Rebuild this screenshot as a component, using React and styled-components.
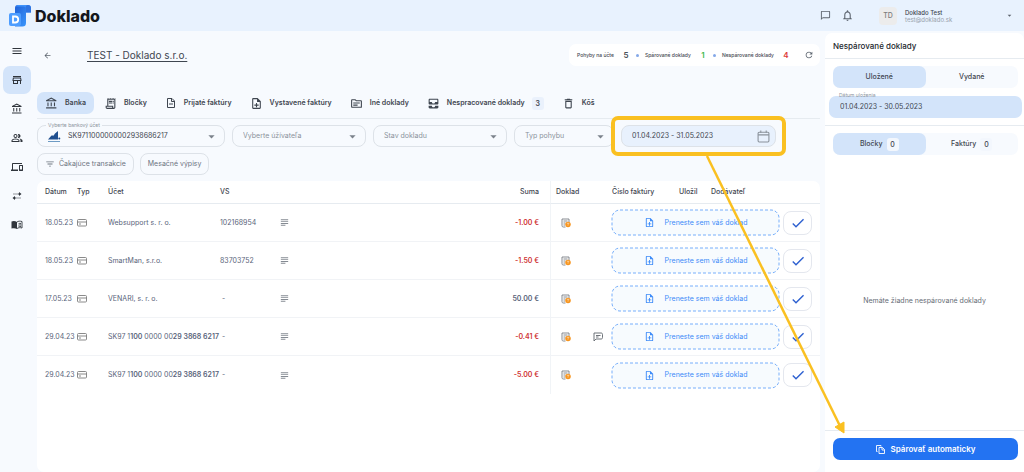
import React, { useState } from "react";
import styled, { createGlobalStyle, css } from "styled-components";
import {
  MdMenu,
  MdOutlineStore,
  MdOutlineAccountBalance,
  MdOutlinePeopleAlt,
  MdOutlineDevices,
  MdArrowBack,
  MdOutlineReceiptLong,
  MdOutlineNoteAdd,
  MdOutlineTopic,
  MdAllInbox,
  MdDeleteOutline,
  MdRefresh,
  MdChatBubbleOutline,
  MdOutlineNotifications,
  MdArrowDropDown,
  MdFilterList,
  MdSubject,
  MdCheck,
} from "react-icons/md";

const color = {
  page: "#f7fafe",
  header: "#e8f2fe",
  active: "#d3e4fa",
  line: "#e6ebf0",
  border: "#dde2e8",
  text: "#3f4650",
  muted: "#8a929c",
  slate: "#59647a",
  blue: "#3d8bf8",
  yellow: "#fac021",
  red: "#cf3434",
};

const GlobalStyle = createGlobalStyle`
  * { box-sizing: border-box; }
  body {
    margin: 0;
    background: ${color.page};
    color: ${color.text};
    font-family: Inter, "Liberation Sans", sans-serif;
    font-size: 7px;
    line-height: 10px;
  }
  button, input, select { font: inherit; color: inherit; margin: 0; padding: 0; border: 0; background: none; }
  button { cursor: pointer; }
  svg { display: block; flex: none; }
`;

const Page = styled.div`
  min-height: 100vh;
  display: flex;
  flex-direction: column;
`;

const Header = styled.header`
  height: 31px;
  padding: 0 10px 0 9px;
  display: flex;
  align-items: center;
  background: ${color.header};
`;

const Brand = styled.a`
  display: flex;
  align-items: center;
  gap: 4px;
  margin-right: auto;
  color: #14171c;
  font-size: 16px;
  line-height: 20px;
  font-weight: 800;
  text-decoration: none;
`;

const IconButton = styled.button`
  display: flex;
  align-items: center;
  justify-content: center;
  color: #5c646e;
`;

const RefreshButton = styled(IconButton)`
  margin-left: 14px;
`;

const HeaderIcons = styled.div`
  display: flex;
  gap: 10px;
  margin-right: 25px;
`;

const Avatar = styled.div`
  width: 18px;
  height: 18px;
  border-radius: 4px;
  background: #ececec;
  color: #7c7c7c;
  font-weight: 500;
  display: flex;
  align-items: center;
  justify-content: center;
`;

const User = styled.div`
  width: 100px;
  margin-left: 8px;
  font-size: 6px;
  line-height: 7px;
  font-weight: 500;
`;

const UserMail = styled.div`
  color: #98a1ac;
  font-weight: 400;
`;

const Body = styled.div`
  flex: 1;
  display: grid;
  grid-template-columns: 37px minmax(0, 1fr) 199px;
`;

const Sidebar = styled.nav`
  padding: 6px 3px;
  display: flex;
  flex-direction: column;
  gap: 1px;
`;

const SideLink = styled.a`
  height: 28px;
  width: 28px;
  border-radius: 7px;
  display: flex;
  align-items: center;
  justify-content: center;
  color: #30353c;
  background: ${(p) => (p.$active ? color.active : "transparent")};
`;

const Main = styled.main`
  display: flex;
  flex-direction: column;
  padding-right: 5px;
`;

const TitleRow = styled.div`
  display: flex;
  align-items: center;
  height: 22px;
  margin-top: 13px;
  padding-left: 6px;
`;

const Title = styled.h1`
  margin: 0 auto 0 35px;
  font-size: 10px;
  line-height: 14px;
  font-weight: 400;
  text-decoration: underline;
  text-underline-offset: 2px;
`;

const Stats = styled.div`
  display: flex;
  align-items: center;
  height: 22px;
  padding: 0 6px 0 8px;
  border-radius: 7px;
  background: #fff;
  font-size: 5px;
  font-weight: 500;
`;

const StatValue = styled.b`
  width: 8px;
  margin-left: 8px;
  text-align: center;
  font-size: 8px;
  font-weight: 600;
  color: ${(p) => p.$tone || "#4b5158"};
`;

const Dot = styled.i`
  width: 3px;
  height: 3px;
  margin: 0 6px;
  border-radius: 50%;
  background: #84a8e8;
`;

const Tabs = styled.div`
  display: flex;
  gap: 2px;
  height: 39px;
  align-items: flex-end;
  margin-top: 14px;
  padding-bottom: 4px;
  border-bottom: 1px solid ${color.line};
`;

const Tab = styled.button`
  height: 22px;
  padding: 0 8px;
  display: flex;
  align-items: center;
  gap: 7px;
  border-radius: 7px;
  font-weight: 600;
  white-space: nowrap;
  background: ${(p) => (p.$active ? color.active : "transparent")};
`;

const Count = styled.span`
  min-width: 12px;
  height: 13px;
  line-height: 13px;
  border-radius: 3px;
  text-align: center;
  background: ${(p) => (p.$light ? "#f3f7fd" : "#eaf1fc")};
`;

const Filters = styled.div`
  display: flex;
  gap: 7px;
  margin-top: 6px;
`;

const Field = styled.div`
  position: relative;
  flex: 0 1 ${(p) => p.$basis}px;
  min-width: 0;
  height: 22px;
  display: flex;
  align-items: center;
  padding: 0 5px 0 10px;
  border: 1px solid ${color.border};
  border-radius: 8px;
  color: ${(p) => (p.$filled ? color.text : color.muted)};
  background: ${(p) => (p.$tint ? "#e8f1fd" : "transparent")};

  select, input { flex: 1; min-width: 0; width: 100%; appearance: none; outline: none; }
  select + svg { color: #7b828b; }
`;

const AccountMark = styled.span`
  margin-right: 7px;
`;

const FloatLabel = styled.label`
  position: absolute;
  top: -5px;
  left: 8px;
  padding: 0 2px;
  font-size: 5px;
  line-height: 8px;
  color: ${color.muted};
  background: ${(p) => (p.$plain ? "transparent" : color.page)};
`;

const Highlight = styled.div`
  position: absolute;
  inset: -10px -11px;
  border: 4px solid ${color.yellow};
  border-radius: 7px;
  pointer-events: none;
  z-index: 2;
`;

const Arrow = styled.svg`
  position: absolute;
  top: 29px;
  left: 79px;
  z-index: 3;
  pointer-events: none;
`;

const Chips = styled.div`
  display: flex;
  gap: 6px;
  margin: 6px 0;
`;

const Chip = styled.button`
  height: 22px;
  padding: 0 7px;
  display: flex;
  align-items: center;
  gap: 4px;
  border: 1px solid ${color.border};
  border-radius: 8px;
  color: #6c747e;
`;

const Card = styled.section`
  flex: 1;
  border-radius: 7px;
  background: #fff;
`;

const Table = styled.table`
  width: 100%;
  table-layout: fixed;
  border-collapse: separate;
  border-spacing: 0;
`;

const Col = styled.col`
  width: ${(p) => (p.$width ? `${p.$width}px` : "auto")};
`;

const Head = styled.th`
  height: 23px;
  padding: 0 ${(p) => (p.$end ? 11 : 0)}px 0 ${(p) => p.$pad || 0}px;
  border-bottom: 1px solid ${color.line};
  border-right: ${(p) => (p.$end ? "1px solid #f1f4f7" : "0")};
  text-align: ${(p) => (p.$end ? "right" : "left")};
  font-weight: 500;
  white-space: nowrap;
`;

const Cell = styled.td`
  height: 38px;
  padding: 0 ${(p) => (p.$end ? 11 : 0)}px 0 ${(p) => p.$pad || 0}px;
  border-bottom: 1px solid #f1f3f6;
  border-right: ${(p) => (p.$end ? "1px solid #f1f4f7" : "0")};
  text-align: ${(p) => (p.$end ? "right" : "left")};
  color: ${(p) => (p.$negative ? color.red : color.slate)};
  font-weight: ${(p) => (p.$end ? 600 : 400)};
  white-space: nowrap;
  tr:last-child > & { border-bottom: 0; }
  b { font-weight: 600; }
`;

const Actions = styled.div`
  display: flex;
  align-items: center;
  gap: 4px;
  padding-right: 8px;
`;

const DropZone = styled.button`
  position: relative;
  flex: 1;
  height: 25px;
  display: flex;
  align-items: center;
  justify-content: center;
  gap: 10px;
  border-radius: 8px;
  background: #f7fbfe;
  color: ${color.blue};
`;

const Dashes = styled.svg`
  position: absolute;
  inset: 0;
  width: 100%;
  height: 100%;
  overflow: visible;
`;

const CheckButton = styled.button`
  width: 29px;
  height: 24px;
  display: flex;
  align-items: center;
  justify-content: center;
  border: 1px solid #e4e7ee;
  border-radius: 8px;
  color: #2c5fd0;
`;

const Aside = styled.aside`
  display: flex;
  flex-direction: column;
  margin-top: 2px;
  background: #fff;
  border-radius: 7px 7px 0 0;
`;

const AsideTitle = styled.h2`
  margin: 0;
  padding: 0 8px;
  height: 26px;
  font-size: 8px;
  line-height: 27px;
  font-weight: 500;
  color: #23272d;
  border-bottom: 1px solid ${color.line};
`;

const Segment = styled.div`
  display: grid;
  grid-template-columns: 1fr 1fr;
  margin: ${(p) => p.$top}px 6px 0 8px;
  border-radius: 7px;
  background: #f7fafe;
`;

const SegmentButton = styled.button`
  height: 22px;
  display: flex;
  align-items: center;
  justify-content: center;
  gap: 4px;
  border-radius: 7px;
  font-weight: 500;
  ${(p) => p.$active && css`background: ${color.active};`}
`;

const AsideDate = styled.div`
  position: relative;
  margin: 8px 2px 0 4px;
  height: 22px;
  display: flex;
  padding: 0 11px;
  border-radius: 7px;
  background: ${color.active};
  input { width: 100%; outline: none; }
`;

const Rule = styled.hr`
  width: 100%;
  margin: 7px 0 0;
  border: 0;
  border-top: 1px solid ${color.line};
`;

const Empty = styled.p`
  flex: 1;
  margin: 0;
  padding-top: 17px;
  display: flex;
  align-items: center;
  justify-content: center;
  color: #666d76;
`;

const AsideFooter = styled.div`
  padding: 7px 6px 12px 8px;
  border-top: 1px solid ${color.line};
`;

const Primary = styled.button`
  width: 100%;
  height: 22px;
  display: flex;
  align-items: center;
  justify-content: center;
  gap: 6px;
  border-radius: 7px;
  background: #2373f2;
  color: #fff;
  font-size: 8px;
  font-weight: 600;
`;

const Logo = () => (
  <svg width="22" height="22" viewBox="0 0 22 22" aria-hidden="true">
    <defs>
      <linearGradient id="roll" x1="0" y1="0" x2="1" y2="1">
        <stop offset="0" stopColor="#1f5fd6" />
        <stop offset="1" stopColor="#3c9bff" />
      </linearGradient>
    </defs>
    <path d="M9 0h10l-2 3v15a3.500 3.500 0 0 1-3.500 3.500H6V3c0-2 1-3 3-3z" fill="url(#roll)" />
    <path d="M8.500 0h10.500c2 0 3 1.200 3 3v4.500h-5.500V3c0-1-1-1.500-2-1.500H7z" fill="#3f93fb" />
    <path d="M16.500 7.500V3c0-1.800 1-3 2.500-3S22 1.200 22 3v4.500z" fill="#2f74e0" />
    <rect x="0" y="8" width="12" height="13" rx="2" fill="#4d9dff" />
    <path d="M4 11.500h2.200a3 3 0 0 1 0 6H4z" fill="none" stroke="#fff" strokeWidth="1.800" />
  </svg>
);

const BankLogo = () => (
  <svg width="13" height="13" viewBox="0 0 13 13" aria-hidden="true">
    <path d="M0 9.500L3.500 5.500h2L3.500 9.500zM3 9.500L7 3.500l3-2.500v8.500z" fill="#1f4f8f" />
    <circle cx="11.300" cy="8.500" r="1" fill="#1f4f8f" />
    <path d="M0 11.500h12" stroke="#6d9bc4" />
  </svg>
);

const SwapIcon = () => (
  <svg width="10" height="10" viewBox="0 0 10 10" fill="currentColor" aria-hidden="true">
    <path d="M1.500 2.500h1v1h-1zM3.500 2.500h1v1h-1zM5.500 2.500H7V1l2.500 2L7 5V3.500H5.500zM7.500 6.500h1v1h-1zM5.500 6.500h1v1h-1zM4.500 6.500H3V5L.500 7 3 9V7.500h1.500z" />
  </svg>
);

const BookIcon = () => (
  <svg width="12" height="12" viewBox="0 0 24 24" fill="none" stroke="currentColor" strokeWidth="1.800" aria-hidden="true">
    <path d="M1 5c4-2 8-1 11 1v14c-3-2-7-2-11-1z" fill="currentColor" stroke="none" />
    <path d="M12 6c3-2 6-2 10-1v13c-4-1-7-1-10 1M15 9.500c2-1 3-1 5-.500M15 12.500c2-1 3-1 5-.500M15 15.500c2-1 3-1 5-.500" />
  </svg>
);

const FileMinus = () => (
  <svg width="12" height="12" viewBox="0 0 24 24" fill="none" stroke="currentColor" strokeWidth="2" aria-hidden="true">
    <path d="M14 3H5v18h14V8zM13 3v6h6M8 14h8" />
  </svg>
);

const CardIcon = () => (
  <svg width="10" height="8" viewBox="0 0 20 16" fill="none" stroke="#7d7d7d" strokeWidth="1.800" aria-hidden="true">
    <rect x="1" y="1" width="18" height="13" rx="2" />
    <path d="M1 6h18M4 10h4" />
  </svg>
);

const DocIcon = () => (
  <svg width="10" height="10" viewBox="0 0 20 20" fill="none" stroke="#6a6f76" strokeWidth="1.600" aria-hidden="true">
    <path d="M9 18H5c-2 0-3-1-3-3V2h14v7M5 6h8M5 10h4M5 14h3" />
    <circle cx="14" cy="13" r="5.500" fill="#f7941d" stroke="none" />
    <path d="M12.500 11.500c0-2 3-2 3 0 0 1-1.500 1-1.500 2M14 15v1" stroke="#fff" strokeWidth="1.200" />
  </svg>
);

const MessageIcon = () => (
  <svg width="10" height="10" viewBox="0 0 20 20" fill="none" stroke="#5f646b" strokeWidth="1.800" aria-hidden="true">
    <path d="M2 18V2h14c2 0 3 1 3 3v6c0 2-1 3-3 3H6zM6 7h9M6 10h5" />
  </svg>
);

const CalendarIcon = () => (
  <svg width="13" height="13" viewBox="0 0 24 24" fill="none" stroke="#8a929b" strokeWidth="2" aria-hidden="true">
    <rect x="2" y="4" width="20" height="18" rx="2" />
    <path d="M2 9h20M7 1v4M17 1v4" />
  </svg>
);

const CopyIcon = () => (
  <svg width="9" height="9" viewBox="0 0 18 18" fill="none" stroke="#fff" strokeWidth="1.800" aria-hidden="true">
    <path d="M6 5h7l4 4v8H6zM12 5v5h5M3 13H1V1h9v2" />
  </svg>
);

const sideItems = [
  ["Menu", MdMenu],
  ["Firma", MdOutlineStore],
  ["Banka", MdOutlineAccountBalance],
  ["Ľudia", MdOutlinePeopleAlt],
  ["Zariadenia", MdOutlineDevices],
  ["Prevody", SwapIcon],
  ["Účtovníctvo", BookIcon],
];

const tabs = [
  ["Banka", MdOutlineAccountBalance],
  ["Bločky", MdOutlineReceiptLong],
  ["Prijaté faktúry", FileMinus],
  ["Vystavené faktúry", MdOutlineNoteAdd],
  ["Iné doklady", MdOutlineTopic],
  ["Nespracované doklady", MdAllInbox, 3],
  ["Kôš", MdDeleteOutline],
];

const iban = (
  <>
    SK97 1<b>100</b> 0000 00<b>29 3868 6217</b>
  </>
);

const rows = [
  { date: "18.05.23", account: "Websupport s. r. o.", vs: "102168954", sum: "-1.00 €" },
  { date: "18.05.23", account: "SmartMan, s.r.o.", vs: "83703752", sum: "-1.50 €" },
  { date: "17.05.23", account: "VENARI, s. r. o.", vs: "-", sum: "50.00 €" },
  { date: "29.04.23", account: iban, vs: "-", sum: "-0.41 €", message: true },
  { date: "29.04.23", account: iban, vs: "-", sum: "-5.00 €" },
];

const columns = [40, 31, 112, 59, null, 118, 42, 19, 67, 32, 109];

function SelectField({ basis, label }) {
  return (
    <Field $basis={basis}>
      <select aria-label={label}>
        <option>{label}</option>
      </select>
      <MdArrowDropDown size={15} />
    </Field>
  );
}

function TransactionRow({ row }) {
  return (
    <tr>
      <Cell $pad={8}>{row.date}</Cell>
      <Cell><CardIcon /></Cell>
      <Cell>{row.account}</Cell>
      <Cell $pad={row.vs === "-" ? 2 : 0}>{row.vs}</Cell>
      <Cell><MdSubject size={11} color="#858b93" /></Cell>
      <Cell $end $negative={row.sum.startsWith("-")}>{row.sum}</Cell>
      <Cell $pad={10}><DocIcon /></Cell>
      <Cell>{row.message && <MessageIcon />}</Cell>
      <Cell colSpan={3}>
        <Actions>
          <DropZone>
            <Dashes aria-hidden="true">
              <rect width="100%" height="100%" rx="8" fill="none" stroke="#76aefb" strokeDasharray="3 2" />
            </Dashes>
            <MdOutlineNoteAdd size={11} />
            Preneste sem váš doklad
          </DropZone>
          <CheckButton aria-label="Potvrdiť"><MdCheck size={16} /></CheckButton>
        </Actions>
      </Cell>
    </tr>
  );
}

export default function App() {
  const [tab, setTab] = useState("Banka");
  const [state, setState] = useState("Uložené");
  const [kind, setKind] = useState("Bločky");

  return (
    <Page>
      <GlobalStyle />
      <Header>
        <Brand href="#"><Logo />Doklado</Brand>
        <HeaderIcons>
          <IconButton aria-label="Správy"><MdChatBubbleOutline size={11} /></IconButton>
          <IconButton aria-label="Upozornenia"><MdOutlineNotifications size={13} /></IconButton>
        </HeaderIcons>
        <Avatar>TD</Avatar>
        <User>
          Doklado Test
          <UserMail>test@doklado.sk</UserMail>
        </User>
        <IconButton aria-label="Používateľské menu"><MdArrowDropDown size={9} /></IconButton>
      </Header>
      <Body>
        <Sidebar>
          {sideItems.map(([name, Icon], i) => (
            <SideLink key={name} href="#" aria-label={name} $active={i === 1}><Icon size={12} /></SideLink>
          ))}
        </Sidebar>
        <Main>
          <TitleRow>
            <IconButton aria-label="Späť"><MdArrowBack size={9} /></IconButton>
            <Title>TEST - Doklado s.r.o.</Title>
            <Stats>
              Pohyby na účte<StatValue>5</StatValue><Dot />
              Spárované doklady<StatValue $tone="#41b94c">1</StatValue><Dot />
              Nespárované doklady<StatValue $tone="#dd3939">4</StatValue>
              <RefreshButton aria-label="Obnoviť"><MdRefresh size={10} /></RefreshButton>
            </Stats>
          </TitleRow>
          <Tabs>
            {tabs.map(([name, Icon, count]) => (
              <Tab key={name} $active={tab === name} onClick={() => setTab(name)}>
                <Icon size={13} />
                {name}
                {count && <Count>{count}</Count>}
              </Tab>
            ))}
          </Tabs>
          <Filters>
            <Field $basis={188} $filled>
              <FloatLabel htmlFor="account">Vyberte bankový účet</FloatLabel>
              <AccountMark><BankLogo /></AccountMark>
              <select id="account"><option>SK9711000000002938686217</option></select>
              <MdArrowDropDown size={15} />
            </Field>
            <SelectField basis={134} label="Vyberte úžívateľa" />
            <SelectField basis={134} label="Stav dokladu" />
            <SelectField basis={100} label="Typ pohybu" />
            <Field $basis={155} $filled $tint>
              <input aria-label="Obdobie" defaultValue="01.04.2023 - 31.05.2023" />
              <IconButton aria-label="Otvoriť kalendár"><CalendarIcon /></IconButton>
              <Highlight />
              <Arrow width="160" height="290" viewBox="0 0 160 290" aria-hidden="true">
                <path d="M6 1L139 271" stroke={color.yellow} strokeWidth="2.500" />
                <path d="M143 278L134 272L143 267z" fill={color.yellow} stroke={color.yellow} />
              </Arrow>
            </Field>
          </Filters>
          <Chips>
            <Chip><MdFilterList size={10} />Čakajúce transakcie</Chip>
            <Chip>Mesačné výpisy</Chip>
          </Chips>
          <Card>
            <Table>
              <colgroup>
                {columns.map((w, i) => <Col key={i} $width={w} />)}
              </colgroup>
              <thead>
                <tr>
                  <Head $pad={8}>Dátum</Head>
                  <Head>Typ</Head>
                  <Head>Účet</Head>
                  <Head>VS</Head>
                  <Head />
                  <Head $end>Suma</Head>
                  <Head $pad={5}>Doklad</Head>
                  <Head />
                  <Head>Číslo faktúry</Head>
                  <Head>Uložil</Head>
                  <Head>Dodávateľ</Head>
                </tr>
              </thead>
              <tbody>
                {rows.map((row, i) => <TransactionRow key={i} row={row} />)}
              </tbody>
            </Table>
          </Card>
        </Main>
        <Aside>
          <AsideTitle>Nespárované doklady</AsideTitle>
          <Segment $top={7}>
            {["Uložené", "Vydané"].map((name) => (
              <SegmentButton key={name} $active={state === name} onClick={() => setState(name)}>{name}</SegmentButton>
            ))}
          </Segment>
          <AsideDate>
            <FloatLabel htmlFor="stored" $plain>Dátum uloženia</FloatLabel>
            <input id="stored" defaultValue="01.04.2023 - 30.05.2023" />
          </AsideDate>
          <Rule />
          <Segment $top={7}>
            {["Bločky", "Faktúry"].map((name) => (
              <SegmentButton key={name} $active={kind === name} onClick={() => setKind(name)}>
                {name}
                <Count $light>0</Count>
              </SegmentButton>
            ))}
          </Segment>
          <Empty>Nemáte žiadne nespárované doklady</Empty>
          <AsideFooter>
            <Primary><CopyIcon />Spárovať automaticky</Primary>
          </AsideFooter>
        </Aside>
      </Body>
    </Page>
  );
}
